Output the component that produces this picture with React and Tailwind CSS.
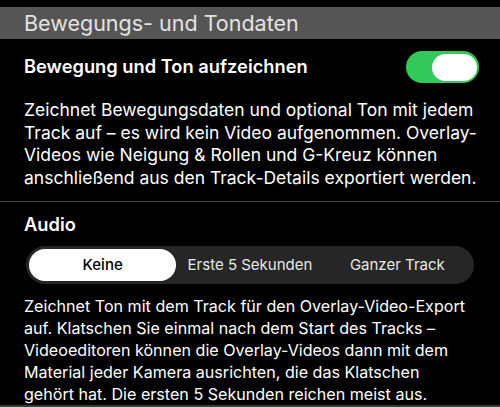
import React, { useState } from "react";

const options = ["Keine", "Erste 5 Sekunden", "Ganzer Track"];

const Toggle = ({ on, onChange }) => (
  <button
    onClick={() => onChange(!on)}
    className={`relative w-[73px] h-[32px] rounded-full flex items-center px-[2px] ${
      on ? "bg-[#34c759] justify-end" : "bg-[#39393d] justify-start"
    }`}
  >
    <span className="block w-[45px] h-[27px] rounded-full bg-white" />
  </button>
);

const App = () => {
  const [record, setRecord] = useState(true);
  const [audio, setAudio] = useState("Keine");

  return (
    <div
      className="w-[500px] h-[407px] bg-black overflow-hidden pt-[7px] flex flex-col"
      style={{ fontFamily: 'Inter, "Liberation Sans", Arial, sans-serif' }}
    >
      <div className="shrink-0 h-[32px] bg-[#555555] px-6 flex items-center text-[21.5px] text-[#e3e3e3]">
        Bewegungs- und Tondaten
      </div>

      <div className="shrink-0 flex items-center justify-between pl-6 pr-[21px] pt-[12px]">
        <span className="text-[18.3px] font-semibold text-white">
          Bewegung und Ton aufzeichnen
        </span>
        <Toggle on={record} onChange={setRecord} />
      </div>

      <p className="shrink-0 pl-6 pr-2 mt-[16px] text-[17.5px] leading-[22.5px] text-white">
        Zeichnet Bewegungsdaten und optional Ton mit jedem
        <br />
        Track auf – es wird kein Video aufgenommen. Overlay-
        <br />
        Videos wie Neigung &amp; Rollen und G-Kreuz können
        <br />
        anschließend aus den Track-Details exportiert werden.
      </p>

      <div className="shrink-0 mt-[12px] h-px bg-[#4a4a4a]" />

      <div className="shrink-0 px-6 pt-[10px] text-[18.3px] leading-[24px] font-semibold text-white">
        Audio
      </div>

      <div className="shrink-0 mx-[26px] mt-[10px] h-[38px] rounded-full bg-[#262626] p-[3px] flex">
        {options.map((opt) => (
          <button
            key={opt}
            onClick={() => setAudio(opt)}
            className={`flex-1 rounded-full text-[15px] ${
              audio === opt ? "bg-white text-black font-medium" : "text-[#e8e8e8]"
            }`}
          >
            {opt}
          </button>
        ))}
      </div>

      <p className="shrink-0 pl-6 pr-2 mt-[11px] text-[16.1px] leading-[22px] text-white">
        Zeichnet Ton mit dem Track für den Overlay-Video-Export
        <br />
        auf. Klatschen Sie einmal nach dem Start des Tracks –
        <br />
        Videoeditoren können die Overlay-Videos dann mit dem
        <br />
        Material jeder Kamera ausrichten, die das Klatschen
        <br />
        gehört hat. Die ersten 5 Sekunden reichen meist aus.
      </p>

      <div className="mt-auto shrink-0 h-[3px] bg-[#3a3a3a]" />
    </div>
  );
};

export default App;
